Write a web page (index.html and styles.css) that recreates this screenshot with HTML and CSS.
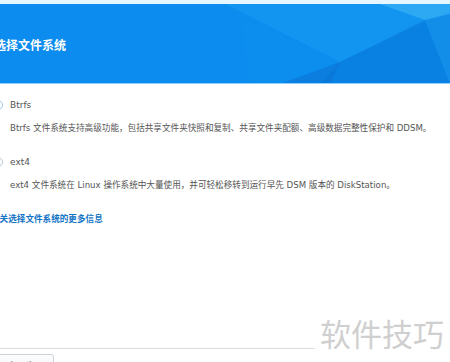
FILE: index.html
```html
<!DOCTYPE html>
<html lang="zh-CN">
<head>
    <meta charset="UTF-8">
    <meta name="viewport" content="width=device-width, initial-scale=1.0">
    <title>选择文件系统</title>
    <link rel="stylesheet" href="styles.css">
</head>
<body>
    <div class="dialog">
        <div class="header">
            <svg class="header-bg" viewBox="0 0 450 80" preserveAspectRatio="none">
                <polygon points="225,0 450,0 450,6 340,58" fill="#1a9cf2" opacity="0.55"/>
                <polygon points="380,0 450,0 450,10 425,16" fill="#3fb8f6" opacity="0.6"/>
                <polygon points="340,58 425,16 450,80 320,80" fill="#0a78d8" opacity="0.55"/>
                <polygon points="280,80 340,58 330,80" fill="#0b6fd0" opacity="0.5"/>
                <polygon points="425,16 450,10 450,80" fill="#1790e6" opacity="0.6"/>
                <polygon points="240,12 340,58 280,80 250,80" fill="#0c92ee" opacity="0.35"/>
            </svg>
            <h1 class="title">选择文件系统</h1>
        </div>

        <div class="content">
            <div class="option">
                <label class="radio-row">
                    <span class="radio checked"></span>
                    <span class="option-name">Btrfs</span>
                </label>
                <p class="option-desc">Btrfs 文件系统支持高级功能，包括共享文件夹快照和复制、共享文件夹配额、高级数据完整性保护和 DDSM。</p>
            </div>

            <div class="option">
                <label class="radio-row">
                    <span class="radio"></span>
                    <span class="option-name">ext4</span>
                </label>
                <p class="option-desc">ext4 文件系统在 Linux 操作系统中大量使用，并可轻松移转到运行早先 DSM 版本的 DiskStation。</p>
            </div>

            <a class="more-link" href="#">有关选择文件系统的更多信息</a>
        </div>

        <div class="footer">
            <div class="footer-top">
                <div class="divider"></div>
                <div class="watermark">软件技巧</div>
            </div>
            <button class="btn">上一步</button>
        </div>
    </div>
</body>
</html>
```

FILE: styles.css
```css
* {
    margin: 0;
    padding: 0;
    box-sizing: border-box;
}

html, body {
    height: 100%;
    overflow: hidden;
}

body {
    font-family: 'DejaVu Sans', 'Noto Sans CJK SC', sans-serif;
    color: #555;
    padding-top: 4px;
    background: linear-gradient(#e6f6ff 0, #e6f6ff 4px, #fff 4px);
}

.dialog {
    margin-left: -12px;
    width: 462px;
}

.header {
    position: relative;
    height: 80px;
    background: #0b8cee;
    border-bottom: 1px solid #8ed2fb;
    display: flex;
    align-items: center;
    overflow: hidden;
}

.header-bg {
    position: absolute;
    top: 0;
    left: 12px;
    width: 450px;
    height: 80px;
}

.title {
    position: relative;
    margin-left: 6px;
    margin-top: 2px;
    font-family: 'Noto Sans CJK SC', sans-serif;
    font-size: 12px;
    font-weight: bold;
    color: #fff;
}

.content {
    padding: 14px 0 0 0;
}

.option {
    margin-bottom: 22px;
}

.radio-row {
    display: flex;
    align-items: center;
    height: 14px;
}

.radio {
    width: 10px;
    height: 10px;
    margin-left: 5px;
    border: 1px solid #bcc6cf;
    border-radius: 50%;
    background: #fff;
    display: flex;
    align-items: center;
    justify-content: center;
}

.radio.checked {
    border-color: #9fc7ea;
}

.radio.checked::after {
    content: "";
    width: 4px;
    height: 4px;
    border-radius: 50%;
    background: #1a7fd8;
}

.option-name {
    margin-left: 7px;
    font-size: 9px;
    color: #555;
}

.option-desc {
    margin-top: 9px;
    margin-left: 22px;
    font-size: 8.6px;
    color: #555;
    white-space: nowrap;
}

.more-link {
    display: block;
    margin-top: 19px;
    margin-left: 3px;
    font-family: 'Noto Sans CJK SC', sans-serif;
    font-size: 8.6px;
    font-weight: bold;
    color: #1474c4;
    text-decoration: none;
}

.footer {
    margin-top: 91px;
}

.footer-top {
    display: flex;
    align-items: flex-end;
    height: 32px;
}

.divider {
    width: 327px;
    height: 1px;
    background: #dcdcdc;
    margin-bottom: -2px;
}

.watermark {
    margin-left: 5px;
    font-family: 'Noto Sans CJK SC', sans-serif;
    font-size: 31px;
    line-height: 36px;
    color: #cfcfcf;
    margin-bottom: -4px;
}

.btn {
    margin-top: 7px;
    width: 66px;
    height: 22px;
    border: 1px solid #c9d3dc;
    border-radius: 3px;
    background: linear-gradient(#fdfdfd, #eef2f5);
    font-family: 'Noto Sans CJK SC', sans-serif;
    font-size: 9px;
    color: #444;
}
```
